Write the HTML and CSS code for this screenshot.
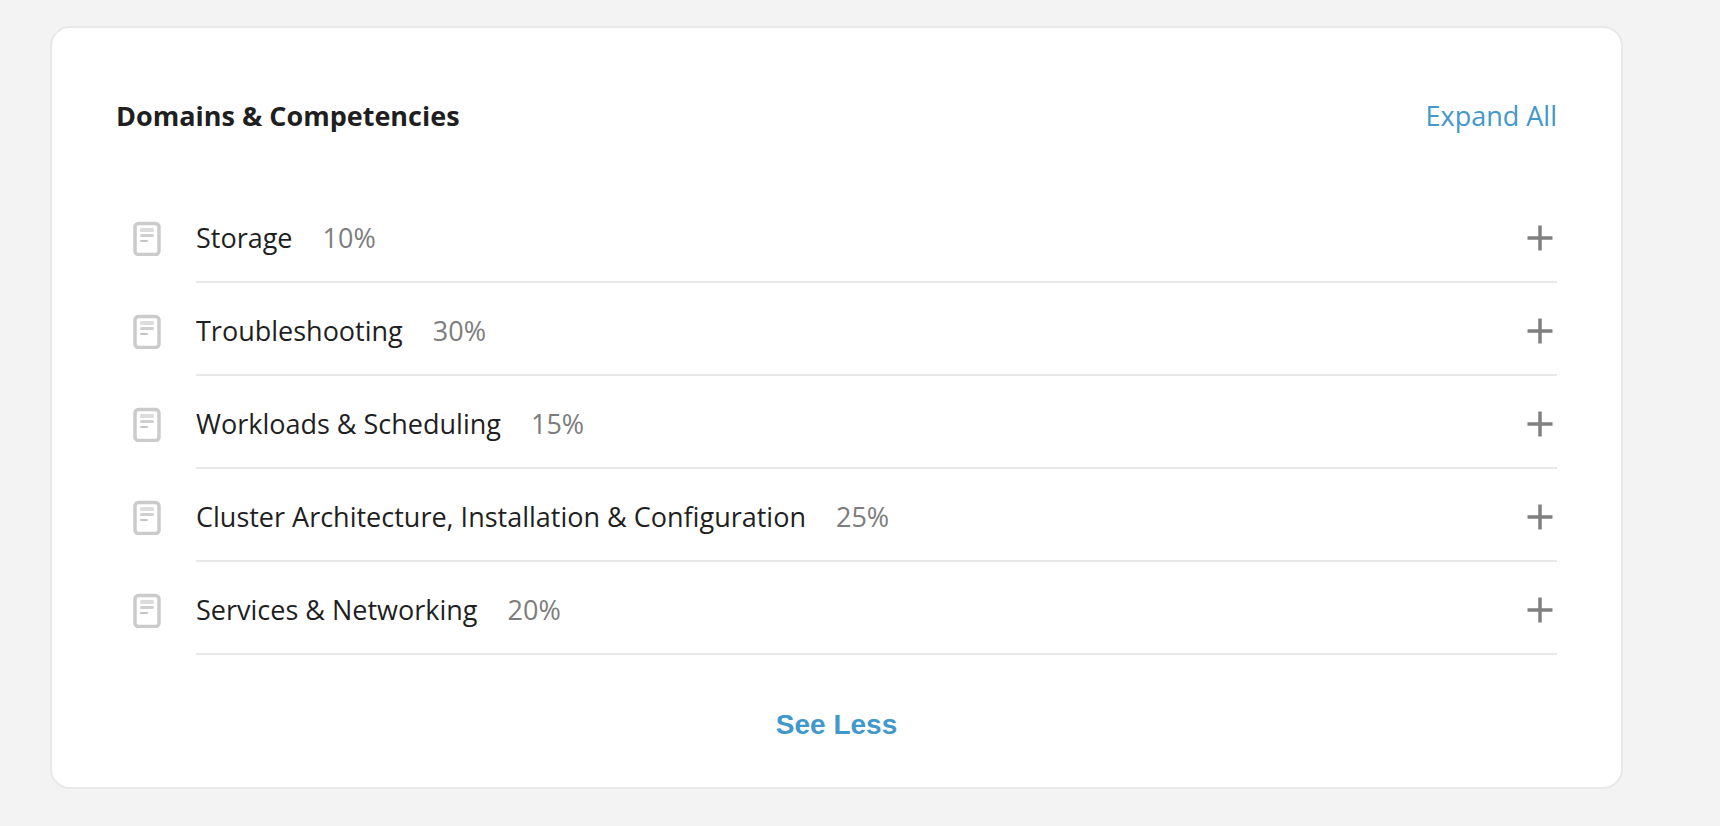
FILE: index.html
```html
<!DOCTYPE html>
<html lang="en">
<head>
<meta charset="utf-8">
<meta name="viewport" content="width=device-width, initial-scale=1">
<title>Domains &amp; Competencies</title>
<link rel="stylesheet" href="styles.css">
</head>
<body>
<svg class="sprite" aria-hidden="true">
  <symbol id="doc" viewBox="0 0 30 38">
    <rect x="3" y="5.5" width="24" height="31" rx="3.5" fill="#fff" stroke="#cbcbcb" stroke-width="3.5"/>
    <rect x="8" y="10" width="14" height="4" rx="1.5" fill="#dcdcdc"/>
    <rect x="8" y="16" width="14" height="3" rx="1.5" fill="#cfcfcf"/>
    <rect x="8" y="22" width="8" height="2" rx="1" fill="#c4c4c4"/>
  </symbol>
  <symbol id="plus" viewBox="0 0 26 26">
    <path d="M13 .5v25M.5 13h25" fill="none" stroke="#808080" stroke-width="3.5"/>
  </symbol>
</svg>
<main class="card">
  <header class="card-header">
    <h2 class="title">Domains &amp; Competencies</h2>
    <button class="expand" type="button">Expand All</button>
  </header>
  <ul class="domains">
    <li class="domain">
      <svg class="doc-icon" aria-hidden="true"><use href="#doc"/></svg>
      <div class="row"><span class="name">Storage</span><span class="percent">10%</span><button class="toggle" type="button" aria-label="Expand Storage"><svg class="plus-icon" aria-hidden="true"><use href="#plus"/></svg></button></div>
    </li>
    <li class="domain">
      <svg class="doc-icon" aria-hidden="true"><use href="#doc"/></svg>
      <div class="row"><span class="name">Troubleshooting</span><span class="percent">30%</span><button class="toggle" type="button" aria-label="Expand Troubleshooting"><svg class="plus-icon" aria-hidden="true"><use href="#plus"/></svg></button></div>
    </li>
    <li class="domain">
      <svg class="doc-icon" aria-hidden="true"><use href="#doc"/></svg>
      <div class="row"><span class="name">Workloads &amp; Scheduling</span><span class="percent">15%</span><button class="toggle" type="button" aria-label="Expand Workloads &amp; Scheduling"><svg class="plus-icon" aria-hidden="true"><use href="#plus"/></svg></button></div>
    </li>
    <li class="domain">
      <svg class="doc-icon" aria-hidden="true"><use href="#doc"/></svg>
      <div class="row"><span class="name">Cluster Architecture, Installation &amp; Configuration</span><span class="percent">25%</span><button class="toggle" type="button" aria-label="Expand Cluster Architecture, Installation &amp; Configuration"><svg class="plus-icon" aria-hidden="true"><use href="#plus"/></svg></button></div>
    </li>
    <li class="domain">
      <svg class="doc-icon" aria-hidden="true"><use href="#doc"/></svg>
      <div class="row"><span class="name">Services &amp; Networking</span><span class="percent">20%</span><button class="toggle" type="button" aria-label="Expand Services &amp; Networking"><svg class="plus-icon" aria-hidden="true"><use href="#plus"/></svg></button></div>
    </li>
  </ul>
  <button class="see-less" type="button">See Less</button>
</main>
</body>
</html>
```
FILE: styles.css
```css
*, *::before, *::after {
  box-sizing: border-box;
}

body {
  margin: 0;
  padding: 26px 97px 37px 50px;
  background: #f3f3f3;
  color: #1f1f1f;
  font: 400 27px/38px "Open Sans", "Noto Sans", sans-serif;
}

button {
  padding: 0;
  border: 0;
  background: none;
  font: inherit;
  cursor: pointer;
}

.sprite {
  position: absolute;
  width: 0;
  height: 0;
}

.card {
  display: flex;
  flex-direction: column;
  padding: 69px 64px 46px;
  border: 2px solid #e8e8e8;
  border-radius: 20px;
  background: #fff;
}

.card-header {
  display: flex;
  align-items: center;
  justify-content: space-between;
}

.title {
  margin: 0;
  font-size: 27px;
  font-weight: 700;
}

.expand {
  color: #4298ca;
}

.domains {
  margin: 55px 0 54px;
  padding: 0;
  list-style: none;
}

.domain {
  display: flex;
  gap: 34px;
  padding-left: 16px;
}

.doc-icon {
  flex: none;
  width: 30px;
  height: 38px;
  margin-top: 28px;
}

.row {
  display: flex;
  flex: 1;
  align-items: center;
  gap: 30px;
  padding: 29px 0 24px;
  border-bottom: 2px solid #e8e8e8;
}

.percent {
  color: #7d7d7d;
}

.toggle {
  display: grid;
  margin-left: auto;
  padding-right: 4px;
}

.plus-icon {
  width: 26px;
  height: 26px;
}

.see-less {
  align-self: center;
  color: #4298ca;
  font: 700 28px/32px "Liberation Sans", Arial, sans-serif;
}
```
